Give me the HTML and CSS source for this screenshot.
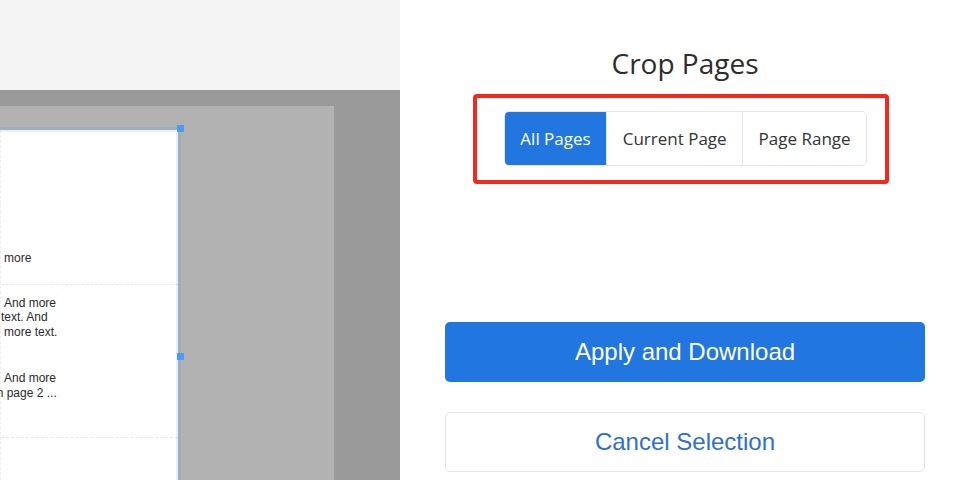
FILE: index.html
```html
<!DOCTYPE html>
<html>
<head>
<meta charset="utf-8">
<link rel="stylesheet" href="styles.css">
</head>
<body>
<div class="app">
  <div class="left">
    <div class="topbar"></div>
    <div class="viewer">
      <div class="sheet">
        <div class="page">
          <div class="block first">
            <div class="line ind4">more</div>
          </div>
          <div class="block second">
            <div class="para">
              <div class="line ind4">And more</div>
              <div class="line ind1">text. And</div>
              <div class="line ind4">more text.</div>
            </div>
            <div class="para">
              <div class="line ind4">And more</div>
              <div class="line cut">on page 2 ...</div>
            </div>
          </div>
          <div class="selection"></div>
          <div class="handle h-top"></div>
          <div class="handle h-mid"></div>
        </div>
      </div>
    </div>
  </div>
  <div class="right">
    <h1 class="title">Crop Pages</h1>
    <div class="highlight">
      <div class="btn-group">
        <button class="seg active">All Pages</button>
        <button class="seg">Current Page</button>
        <button class="seg">Page Range</button>
      </div>
    </div>
    <div class="actions">
      <button class="btn primary">Apply and Download</button>
      <button class="btn outline">Cancel Selection</button>
    </div>
  </div>
</div>
</body>
</html>
```

FILE: styles.css
```css
* { box-sizing: border-box; }
html, body { margin: 0; padding: 0; }
body {
  width: 960px;
  height: 480px;
  overflow: hidden;
  background: #fff;
  font-family: "Liberation Sans", Arial, sans-serif;
}
.app {
  display: flex;
  height: 480px;
}
.left {
  width: 400px;
  display: flex;
  flex-direction: column;
}
.topbar {
  height: 90px;
  background: #f3f3f3;
}
.viewer {
  flex: 1;
  background: #9a9a9a;
  padding-top: 16px;
  display: flex;
}
.sheet {
  width: 334px;
  background: #b2b2b2;
  padding-top: 24px;
  display: flex;
}
.page {
  position: relative;
  width: 178px;
  background: #fff;
  border-left: 1px dashed #eeeeee;
  font-size: 12px;
  color: #2a2a2a;
  line-height: 14.5px;
}
.block {
  border-bottom: 1px dashed #e9e9e9;
}
.block.first {
  padding-top: 121px;
  padding-bottom: 18px;
}
.block.second {
  padding-top: 11px;
  padding-bottom: 37px;
}
.para + .para {
  margin-top: 32px;
}
.line { white-space: nowrap; }
.ind4 { padding-left: 3px; }
.ind1 { padding-left: 0; }
.cut { margin-left: -11px; }
.selection {
  position: absolute;
  top: -3px;
  right: -3px;
  bottom: -20px;
  left: -20px;
  border: 5px solid rgba(74, 150, 240, 0.14);
}
.handle {
  position: absolute;
  width: 7px;
  height: 7px;
  background: #4d9cf2;
  right: -6px;
}
.h-top { top: -5px; }
.h-mid { top: 223px; }

.right {
  flex: 1;
  display: flex;
  flex-direction: column;
  align-items: center;
  padding: 0 35px 0 45px;
}
.title {
  margin: 45px 0 0 0;
  font-family: "Open Sans", "Noto Sans", sans-serif;
  font-weight: 400;
  font-size: 28px;
  line-height: 36px;
  color: #2d2d2d;
}
.highlight {
  margin-top: 13px;
  margin-left: -8px;
  border: 4px solid #f5281e;
  border-radius: 4px;
  padding: 13px 18px 14px 27px;
}
.btn-group {
  display: flex;
  border: 1px solid #e6e6e6;
  border-radius: 5px;
  overflow: hidden;
}
.seg {
  font-family: "Open Sans", "Noto Sans", sans-serif;
  font-size: 17px;
  height: 53px;
  border: 0;
  background: #fff;
  color: #333;
  padding: 0 15.5px;
  margin: 0;
}
.seg + .seg { border-left: 1px solid #e6e6e6; }
.seg.active {
  background: #2176df;
  color: #fff;
}
.actions {
  align-self: stretch;
  margin-top: 138px;
  display: flex;
  flex-direction: column;
  gap: 30px;
}
.btn {
  height: 60px;
  border-radius: 5px;
  font-family: "Liberation Sans", Arial, sans-serif;
  font-size: 24px;
  margin: 0;
}
.primary {
  background: #2176df;
  color: #fff;
  border: 0;
}
.outline {
  background: #fff;
  border: 1px solid #e6e6e6;
  color: #2d6fd2;
}
```
